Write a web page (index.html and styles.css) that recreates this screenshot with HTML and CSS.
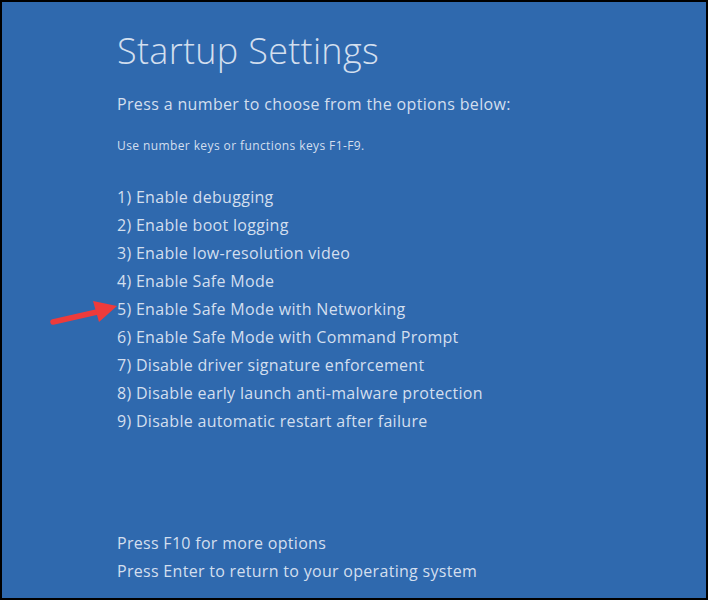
FILE: index.html
```html
<!DOCTYPE html>
<html lang="en">
<head>
  <meta charset="UTF-8" />
  <title>Startup Settings</title>
  <link rel="stylesheet" href="styles.css">
</head>
<body>
  <div class="screen">
    <h1>Startup Settings</h1>
    <p class="lead">Press a number to choose from the options below:</p>
    <p class="hint">Use number keys or functions keys F1-F9.</p>

    <ul class="options">
      <li>1) Enable debugging</li>
      <li>2) Enable boot logging</li>
      <li>3) Enable low-resolution video</li>
      <li>4) Enable Safe Mode</li>
      <li class="marked">
        <svg class="arrow" width="70" height="30" viewBox="0 0 70 30">
          <path d="M4 24 L48 14" stroke="#ee3b3b" stroke-width="5.5" stroke-linecap="round" fill="none"/>
          <path d="M44 3 L68 8 L50 24 Z" fill="#ee3b3b"/>
        </svg>
        5) Enable Safe Mode with Networking
      </li>
      <li>6) Enable Safe Mode with Command Prompt</li>
      <li>7) Disable driver signature enforcement</li>
      <li>8) Disable early launch anti-malware protection</li>
      <li>9) Disable automatic restart after failure</li>
    </ul>

    <div class="footer">
      <p>Press F10 for more options</p>
      <p>Press Enter to return to your operating system</p>
    </div>
  </div>
</body>
</html>
```

FILE: styles.css
```css
body {
  margin: 0;
  background: #000;
  font-family: "Open Sans", "Noto Sans", sans-serif;
  color: #d3dfee;
}
.screen {
  box-sizing: border-box;
  width: 704px;
  height: 596px;
  margin: 2px 0 0 2px;
  background: #2f69ae;
  padding: 28px 0 0 115px;
  display: flex;
  flex-direction: column;
}
h1 {
  margin: 0;
  font-size: 36px;
  font-weight: 300;
  letter-spacing: 0.3px;
  line-height: 42px;
}
.lead {
  margin: 22px 0 0;
  font-size: 16px;
  letter-spacing: 0.35px;
  line-height: 20px;
}
.hint {
  margin: 25px 0 0;
  font-size: 12px;
  letter-spacing: 0.4px;
  line-height: 14px;
}
.options {
  list-style: none;
  margin: 30px 0 0;
  padding: 0;
}
.options li {
  font-size: 16px;
  letter-spacing: 0.3px;
  line-height: 28px;
}
.marked {
  position: relative;
}
.arrow {
  position: absolute;
  left: -68px;
  top: 3px;
}
.footer {
  margin-top: auto;
  padding-bottom: 13px;
}
.footer p {
  margin: 0;
  font-size: 16px;
  letter-spacing: 0.3px;
  line-height: 28px;
}
```
